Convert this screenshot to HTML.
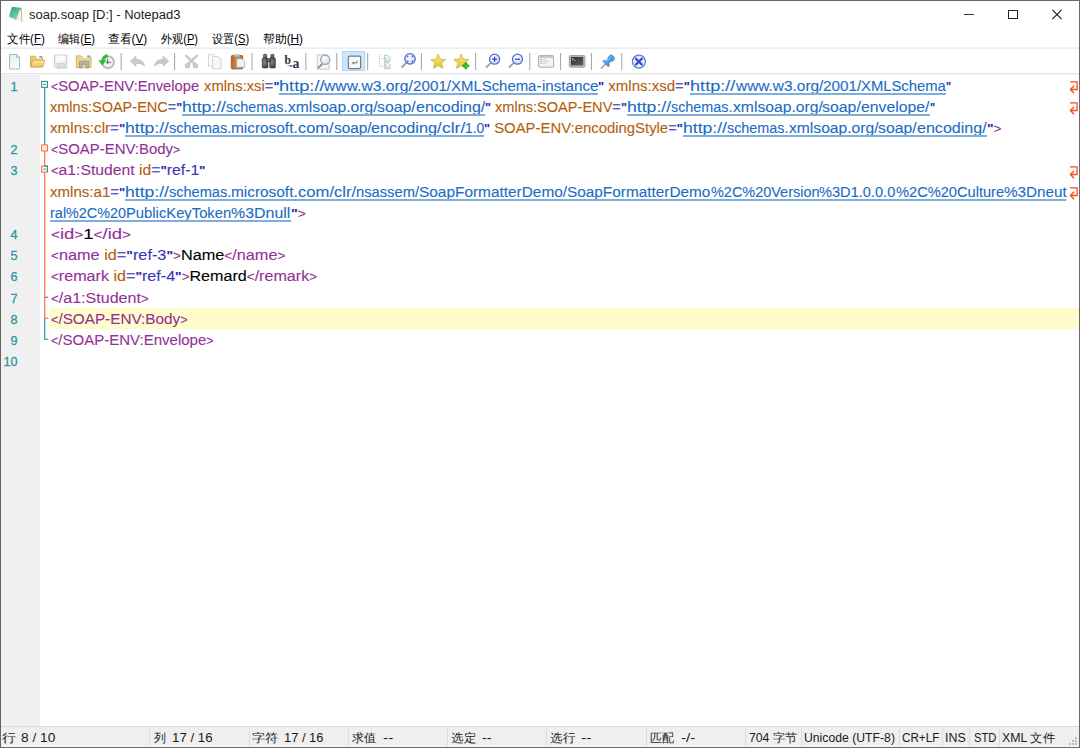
<!DOCTYPE html>
<html><head><meta charset="utf-8"><style>
*{box-sizing:border-box}
html,body{margin:0;padding:0}
body{width:1080px;height:748px;position:relative;overflow:hidden;background:#fff;font-family:"Liberation Sans",sans-serif}
.abs{position:absolute}
.row{position:absolute;white-space:pre;font-size:15.2px;-webkit-text-stroke:0.1px currentColor;line-height:20px;height:20px;transform-origin:0 0}
.br{font-size:12.6px}
.u2{color:#1a6cc4}
.ul{position:absolute;height:2px;background:#7eaedc}
.qt{font-weight:bold;font-size:13px;color:#2c2ca8}
.u{color:#1a6cc4;text-decoration:underline;text-decoration-color:#7aaad8;text-underline-offset:2px;text-decoration-thickness:2px;text-decoration-skip-ink:none}
.ln{position:absolute;left:0;width:17.4px;text-align:right;font-size:12.6px;line-height:20px;color:#2a96a4;-webkit-text-stroke:0.3px currentColor}
.wa{position:absolute;left:1067px}
.menu{position:absolute;top:31px;font-size:12px;line-height:16px;color:#000;white-space:pre;transform-origin:0 0}
.ttl{position:absolute;top:7px;font-size:12px;line-height:16px;color:#1a1a1a;white-space:pre;transform-origin:0 0}
.sb{position:absolute;top:730px;font-size:12px;line-height:16px;color:#1a1a1a;white-space:pre;transform-origin:0 0}
.sep{position:absolute;top:53px;width:1px;height:17px;background:#a8a8a8}
.ssep{position:absolute;top:728px;width:1px;height:18px;background:#dcdcdc}
</style></head><body>
<!-- window border -->
<div class="abs" style="left:0;top:0;width:1080px;height:1px;background:#676767"></div>
<div class="abs" style="left:0;top:0;width:1px;height:748px;background:#646464"></div>
<div class="abs" style="left:1px;top:75px;width:1px;height:651px;background:#fafafa"></div>
<div class="abs" style="left:1079px;top:0;width:1px;height:748px;background:#676767"></div>
<div class="abs" style="left:0;top:747px;width:1080px;height:1px;background:#6a6a6a"></div>
<!-- title -->
<svg class="abs" style="left:0;top:0" width="30" height="30" viewBox="0 0 30 30">
<defs><linearGradient id="gIco" x1="0" y1="0" x2="0.6" y2="1"><stop offset="0" stop-color="#14a877"/><stop offset="1" stop-color="#8fd4b8"/></linearGradient></defs>
<path d="M12 6.8L21.6 8.1L16.4 20.2L8.8 16.6Z" fill="url(#gIco)"/>
<path d="M19.9 9.2L21.2 21.8L16.3 20.2Z" fill="#f1f1f1"/>
<path d="M21.3 7.9L21.9 22" stroke="#deb36a" stroke-width="1"/>
</svg>
<div class="ttl" style="left:28.97px;transform:scaleX(1.0806);">soap.soap [D:] - Notepad3</div>
<div class="abs" style="left:964px;top:14px;width:10px;height:1px;background:#333"></div>
<div class="abs" style="left:1008px;top:10px;width:10px;height:9px;border:1px solid #222"></div>
<svg class="abs" style="left:1051px;top:9px" width="12" height="12" viewBox="0 0 12 12"><path d="M1.4 0.9L10.6 10.1M10.6 0.9L1.4 10.1" stroke="#1a1a1a" stroke-width="1.15"/></svg>
<!-- menu -->
<div class="menu" style="left:6.53px;transform:scaleX(0.9627);">文件(<u>F</u>)</div><div class="menu" style="left:58.03px;transform:scaleX(0.9244);">编辑(<u>E</u>)</div><div class="menu" style="left:107.53px;transform:scaleX(0.9791);">查看(<u>V</u>)</div><div class="menu" style="left:161.49px;transform:scaleX(0.9244);">外观(<u>P</u>)</div><div class="menu" style="left:212.00px;transform:scaleX(0.9303);">设置(<u>S</u>)</div><div class="menu" style="left:262.51px;transform:scaleX(0.9849);">帮助(<u>H</u>)</div>
<div class="abs" style="left:1px;top:47px;width:1078px;height:1px;background:#f3f3f3"></div><div class="abs" style="left:1px;top:48px;width:1078px;height:1px;background:#ededed"></div>
<!-- toolbar -->
<svg class="abs" style="left:0;top:48px" width="660" height="26" viewBox="0 48 660 26">
<defs>
<linearGradient id="gDoc" x1="0" y1="0" x2="1" y2="1"><stop offset="0" stop-color="#dfeef2"/><stop offset="1" stop-color="#ffffff"/></linearGradient>
<linearGradient id="gFold" x1="0" y1="0" x2="0" y2="1"><stop offset="0" stop-color="#fbe9a8"/><stop offset="1" stop-color="#e7c268"/></linearGradient>
<linearGradient id="gStar" x1="0" y1="0" x2="0" y2="1"><stop offset="0" stop-color="#f8ec80"/><stop offset="1" stop-color="#e2c22a"/></linearGradient>
<linearGradient id="gBrown" x1="0" y1="0" x2="1" y2="0"><stop offset="0" stop-color="#b86428"/><stop offset="0.5" stop-color="#d88a48"/><stop offset="1" stop-color="#b06020"/></linearGradient>
<radialGradient id="gBin" cx="0.4" cy="0.4" r="0.8"><stop offset="0" stop-color="#8a8a8a"/><stop offset="1" stop-color="#2e2e2e"/></radialGradient>
<radialGradient id="gLens" cx="0.4" cy="0.35" r="0.7"><stop offset="0" stop-color="#ffffff"/><stop offset="1" stop-color="#c8dcef"/></radialGradient>
</defs>
<!-- separators -->
<g fill="#a9a9a9">
<rect x="120.6" y="53" width="1.1" height="17"/><rect x="174" y="53" width="1.1" height="17"/><rect x="251.4" y="53" width="1.1" height="17"/>
<rect x="305.3" y="53" width="1.1" height="17"/><rect x="336.2" y="53" width="1.1" height="17"/><rect x="367.1" y="53" width="1.1" height="17"/>
<rect x="420.9" y="53" width="1.1" height="17"/><rect x="475" y="53" width="1.1" height="17"/><rect x="529.2" y="53" width="1.1" height="17"/>
<rect x="560" y="53" width="1.1" height="17"/><rect x="590.9" y="53" width="1.1" height="17"/><rect x="621.2" y="53" width="1.1" height="17"/>
</g>
<!-- new -->
<path d="M9.5 54.5H17L19.5 57V69H9.5Z" fill="url(#gDoc)" stroke="#a9babd" stroke-width="1"/>
<path d="M16.5 54.5V57.5H19.5" fill="#c7d3d6" stroke="#a9babd" stroke-width="0.8"/>
<!-- open -->
<path d="M30.5 56.2H35L36 57.2H42.5V66.8H30.5Z" fill="#eccb75" stroke="#d2a647" stroke-width="0.9"/>
<path d="M36.5 55.8H41.5V58.5H36.5Z" fill="#ffffff"/><path d="M39.3 56H42V57.6H39.3Z" fill="#49a8e8"/>
<path d="M32.5 60.2H44.8L42.8 67H30.6Z" fill="url(#gFold)" stroke="#d2a647" stroke-width="0.9"/>
<!-- save (disabled) -->
<path d="M54.5 55.2H66.8V68H55.8L54.5 66.7Z" fill="#eeeeee" stroke="#c9c9c9" stroke-width="1"/>
<rect x="56.2" y="55.6" width="9" height="5.8" fill="#fbfbfb"/>
<rect x="57.5" y="63.5" width="7" height="4.3" fill="#dcdcdc" stroke="#c4c4c4" stroke-width="0.6"/>
<!-- save as -->
<path d="M76.3 55.8H81L82 57H91V67.6H76.3Z" fill="#efd389" stroke="#d6ae58" stroke-width="0.9"/>
<path d="M82.5 55.4H89.8V57.6H82.5Z" fill="#ffffff"/><path d="M87.2 55.5H90V57.2H87.2Z" fill="#49a8e8"/>
<path d="M79.5 68V61.2H88.5V68H86.3V64.2H81.8V68Z" fill="#b4b4b4" stroke="#8e8e8e" stroke-width="0.7"/>
<!-- recent -->
<circle cx="108" cy="62.2" r="6" fill="#eef3f3" stroke="#b9b9bd" stroke-width="1.9"/>
<path d="M107.6 58.6V63.9M106.2 62.3H111" fill="none" stroke="#555" stroke-width="0.9"/>
<path d="M107 54.5C103.8 54.9 102 57.2 101.9 60.6L98.9 60.6L102.3 65L105.8 60.6L104.3 60.6C104.5 58.6 105.6 57.3 107.8 56.9Z" fill="#22c32e" stroke="#1aa024" stroke-width="0.4"/>
<!-- undo / redo (disabled) -->
<path d="M130.2 61.2L136 56V59.2C140.5 59.2 144.2 61.5 144.6 66.3C142.6 64 140 63.4 136 63.5V66.4Z" fill="#cacaca" stroke="#bcbcbc" stroke-width="0.6"/>
<path d="M168.8 61.2L163 56V59.2C158.5 59.2 154.8 61.5 154.4 66.3C156.4 64 159 63.4 163 63.5V66.4Z" fill="#cacaca" stroke="#bcbcbc" stroke-width="0.6"/>
<!-- cut (disabled) -->
<path d="M186.2 55.8L194.6 63.6M196.8 55.8L188.4 63.6" stroke="#c6c6c6" stroke-width="2.3" stroke-linecap="round"/>
<ellipse cx="187.6" cy="65.6" rx="2.9" ry="2.5" fill="#c2c2c2" transform="rotate(-35 187.6 65.6)"/>
<ellipse cx="195.4" cy="65.6" rx="2.9" ry="2.5" fill="#c2c2c2" transform="rotate(35 195.4 65.6)"/>
<ellipse cx="187.6" cy="65.6" rx="1.2" ry="0.9" fill="#dcdcdc" transform="rotate(-35 187.6 65.6)"/>
<ellipse cx="195.4" cy="65.6" rx="1.2" ry="0.9" fill="#dcdcdc" transform="rotate(35 195.4 65.6)"/>
<!-- copy (disabled) -->
<path d="M208.5 54.5H213.5L215 56V66.3H208.5Z" fill="#fafafa" stroke="#d2d2d2" stroke-width="0.9"/>
<path d="M212.7 56.5H218.7L221.2 59V68.8H212.7Z" fill="#f7f7f7" stroke="#cfcfcf" stroke-width="0.9"/>
<!-- paste -->
<rect x="231.3" y="55.5" width="11.4" height="13.4" rx="1" fill="url(#gBrown)" stroke="#9c5620" stroke-width="0.8"/>
<path d="M234.5 54.7H239.7V56.8H234.5Z" fill="#c9c9c9" stroke="#9a9a9a" stroke-width="0.6"/>
<path d="M236.8 58.8H242L244.6 61.2V67.3H236.8Z" fill="#eef4f4" stroke="#9fb3b3" stroke-width="0.8"/>
<!-- find (binoculars) -->
<g fill="url(#gBin)" stroke="#2a2a2a" stroke-width="0.5">
<rect x="263.5" y="54.3" width="3.2" height="4" rx="0.8"/><rect x="270.8" y="54.3" width="3.2" height="4" rx="0.8"/>
<rect x="262.2" y="58" width="5.8" height="10" rx="1.2"/><rect x="269.6" y="58" width="5.8" height="10" rx="1.2"/>
<rect x="267" y="58.8" width="3.6" height="3"/>
</g>
<!-- replace -->
<text x="284.6" y="63.8" font-family="Liberation Serif" font-weight="bold" font-size="11.6" fill="#2a2a2a">b</text>
<text x="292.4" y="67.6" font-family="Liberation Serif" font-weight="bold" font-size="13.6" fill="#333">a</text>
<path d="M287.6 64.6Q288.4 66.2 290.6 66" fill="none" stroke="#5a86ee" stroke-width="0.9"/><circle cx="291.2" cy="66" r="1.1" fill="#2a5ee0"/>
<!-- find in files -->
<path d="M317.3 54.8H327.2L329 56.6V69.3H317.3Z" fill="#f2f6f6" stroke="#b1c0c0" stroke-width="0.8"/>
<path d="M318.5 67.6L321.8 64.3" stroke="#8a8a8a" stroke-width="1.8" stroke-linecap="round"/>
<circle cx="325.2" cy="59.8" r="4.6" fill="url(#gLens)" stroke="#a2a2a2" stroke-width="1.2"/>
<!-- word wrap (pressed) -->
<rect x="342.4" y="51.4" width="22.4" height="19.1" fill="#cce8ff" stroke="#99d1ff" stroke-width="0.8"/>
<rect x="348.3" y="56.2" width="12.3" height="12.4" rx="1.3" fill="#f8f8f8" stroke="#7a7a7a" stroke-width="1.2"/>
<path d="M356.8 60.8V62.9H352.6M353.9 61.7L352.5 62.9L353.9 64.1" fill="none" stroke="#555" stroke-width="0.8"/>
<!-- fold tree -->
<path d="M379.3 54V66.2H383.6M379.3 58.6H383.6" fill="none" stroke="#b0b0b0" stroke-width="0.8" stroke-dasharray="0.9 0.9"/>
<path d="M384.4 55.4H388L390 57.4V61.4H384.4Z" fill="#eef5f4" stroke="#a5bdb9" stroke-width="0.8"/>
<path d="M385.8 57V60H388.4" fill="none" stroke="#b8cdca" stroke-width="0.8"/>
<path d="M384.4 62.6H388L390 64.6V68.6H384.4Z" fill="#eef5f4" stroke="#a5bdb9" stroke-width="0.8"/>
<path d="M385.8 64.2V67.2H388.4" fill="none" stroke="#b8cdca" stroke-width="0.8"/>
<!-- zoom fit -->
<path d="M402.2 67L405.6 63.6" stroke="#a4a4a4" stroke-width="2" stroke-linecap="round"/>
<circle cx="410" cy="58.9" r="5.2" fill="url(#gLens)" stroke="#5a6ada" stroke-width="1.3"/>
<path d="M407.3 57.4V56.2H408.5M411.5 56.2H412.7V57.4M412.7 60.4V61.6H411.5M408.5 61.6H407.3V60.4" fill="none" stroke="#3848c8" stroke-width="0.9"/>
<!-- stars -->
<path d="M438.2 54.3L440.3 59.2L445.6 59.6L441.6 63.1L442.9 68.4L438.2 65.6L433.5 68.4L434.8 63.1L430.8 59.6L436.1 59.2Z" fill="url(#gStar)" stroke="#c5a62a" stroke-width="0.7"/>
<path d="M461.2 54.3L463.3 59.2L468.6 59.6L464.6 63.1L465.9 68.4L461.2 65.6L456.5 68.4L457.8 63.1L453.8 59.6L459.1 59.2Z" fill="url(#gStar)" stroke="#c5a62a" stroke-width="0.7"/>
<path d="M464.95 62.80 L466.85 62.80 L466.85 64.85 L468.90 64.85 L468.90 66.75 L466.85 66.75 L466.85 68.80 L464.95 68.80 L464.95 66.75 L462.90 66.75 L462.90 64.85 L464.95 64.85Z" fill="#2bc83a" stroke="#15901f" stroke-width="0.6"/>
<!-- zoom in / out -->
<path d="M486.6 67L490 63.6" stroke="#a4a4a4" stroke-width="2" stroke-linecap="round"/>
<circle cx="494.6" cy="59.2" r="5" fill="url(#gLens)" stroke="#5a6ada" stroke-width="1.3"/>
<path d="M492.1 59.2H497.1M494.6 56.7V61.7" stroke="#2840c0" stroke-width="1.2"/>
<path d="M509.5 67L512.9 63.6" stroke="#a4a4a4" stroke-width="2" stroke-linecap="round"/>
<circle cx="517.5" cy="59.2" r="5" fill="url(#gLens)" stroke="#5a6ada" stroke-width="1.3"/>
<path d="M515 59.2H520" stroke="#2840c0" stroke-width="1.2"/>
<!-- scheme window -->
<rect x="538.6" y="55.4" width="15" height="11.8" rx="1.2" fill="#f3f3f3" stroke="#a4a4a4" stroke-width="0.9"/>
<rect x="538.9" y="55.8" width="14.4" height="2" fill="#c4c4c4"/>

<path d="M540.3 59.3H542" stroke="#6ccc6c" stroke-width="0.9"/><path d="M540.3 61.3H542" stroke="#ec8a8a" stroke-width="0.9"/><path d="M540.3 63.3H542" stroke="#8cbcf0" stroke-width="0.9"/>
<path d="M542.6 59.3H547M542.6 61.3H549M542.6 63.3H546.5" stroke="#c8c8c8" stroke-width="0.8"/>
<!-- console -->
<rect x="569.3" y="55.5" width="15.6" height="11.7" rx="1.2" fill="#c4c4c4" stroke="#9a9a9a" stroke-width="0.9"/>
<linearGradient id="gScr" x1="0" y1="0" x2="1" y2="1"><stop offset="0" stop-color="#2c2c30"/><stop offset="1" stop-color="#62626f"/></linearGradient>
<rect x="570.9" y="56.9" width="12.4" height="8.6" fill="url(#gScr)"/>
<path d="M571.9 58.2L573.6 59.1L571.9 60M573.9 60.5H575.6" fill="none" stroke="#d8d8d8" stroke-width="0.7"/>
<!-- pin -->
<g transform="translate(601.1 68.5) rotate(-45)">
<path d="M0.2 0H6.6" stroke="#9c9c9c" stroke-width="1.4" stroke-linecap="round"/>
<path d="M6.2 -4L7.6 -4Q9.2 -1.6 11.2 -1.6Q12.4 -3.1 13.4 -3.1L16.4 -3.1Q18.6 0 16.4 3.1L13.4 3.1Q12.4 3.1 11.2 1.6Q9.2 1.6 7.6 4L6.2 4Z" fill="#4d9be4" stroke="#3a86d4" stroke-width="0.5"/>
<path d="M7.2 -2.6Q9 -0.6 11.2 -0.8L16 -1.8" fill="none" stroke="#9fd0fa" stroke-width="0.7"/>
</g>
<!-- close -->
<circle cx="638.9" cy="61.6" r="6.5" fill="#eceef4" stroke="#5d78e0" stroke-width="1.3"/>
<path d="M636 58.7L641.8 64.5M641.8 58.7L636 64.5" stroke="#2d4ccc" stroke-width="2.3" stroke-linecap="round"/>
</svg>

<div class="abs" style="left:1px;top:73px;width:1078px;height:1px;background:#e3e3e3"></div><div class="abs" style="left:1px;top:74px;width:1078px;height:1px;background:#f4f4f4"></div>
<!-- editor -->
<div class="abs" style="left:1px;top:75px;width:39.4px;height:651px;background:#f0f0f0"></div>
<div class="abs" style="left:50px;top:307.78px;width:1029px;height:21px;background:#fffccc"></div>
<div class="ln" style="top:76.70px">1</div><div class="ln" style="top:140.24px">2</div><div class="ln" style="top:161.42px">3</div><div class="ln" style="top:224.96px">4</div><div class="ln" style="top:246.14px">5</div><div class="ln" style="top:267.32px">6</div><div class="ln" style="top:288.50px">7</div><div class="ln" style="top:309.68px">8</div><div class="ln" style="top:330.86px">9</div><div class="ln" style="top:352.04px">10</div>
<svg style="position:absolute;left:38px;top:74px" width="12" height="300" viewBox="38 74 12 300">
<line x1="44.7" y1="88.0" x2="44.7" y2="145.54" stroke="#2e9494" stroke-width="1.15"/>
<line x1="44.7" y1="150.54" x2="44.7" y2="318.28000000000003" stroke="#ff6a3a" stroke-width="1.15"/>
<line x1="44.7" y1="318.28000000000003" x2="44.7" y2="339.26" stroke="#2e9494" stroke-width="1.15"/>
<line x1="44.1" y1="339.26" x2="48.2" y2="339.26" stroke="#2e9494" stroke-width="1.15"/>
<line x1="44.7" y1="318.28000000000003" x2="48.2" y2="318.28000000000003" stroke="#ff6a3a" stroke-width="1.15"/>
<line x1="44.7" y1="297.3" x2="48.2" y2="297.3" stroke="#2e9494" stroke-width="1.15"/>
<rect x="41.65" y="81.45" width="5.8" height="5.9" fill="#fff" stroke="#2e9494" stroke-width="1.1"/>
<line x1="43.2" y1="84.4" x2="46.2" y2="84.4" stroke="#2e9494" stroke-width="1"/>
<rect x="41.65" y="144.98999999999998" width="5.8" height="5.9" fill="#fff" stroke="#ff6a3a" stroke-width="1.1"/>
<line x1="43.2" y1="147.94" x2="46.2" y2="147.94" stroke="#ffb090" stroke-width="1"/>
<rect x="41.65" y="166.17" width="5.8" height="5.9" fill="#fff" stroke="#ff6a3a" stroke-width="1.1"/>
<path d="M44.7 166.17H47.45V172.07" fill="none" stroke="#2e9494" stroke-width="1.1"/>
<line x1="43.2" y1="169.12" x2="46.2" y2="169.12" stroke="#2e9494" stroke-width="1"/>
</svg>
<div class="row" id="g0_0" style="top:75.70px;left:51.40px;transform:scaleX(0.9690)"><span style="color:#923196"><span class="br">&lt;</span>SOAP-ENV:Envelope</span></div><div class="row" id="g0_1" style="top:75.70px;left:199.50px;transform:scaleX(0.9716)"><span style="color:#b25e0c"> xmlns:xsi</span><span style="color:#5a5acc">=</span><span style="color:#3636b4"><span class="qt">"</span></span></div><div class="row" id="g0_2" style="top:75.70px;left:278.90px;transform:scaleX(1.1974)"><span class="u2">http://</span></div><div class="row" id="g0_3" style="top:75.70px;left:324.40px;transform:scaleX(1.0326)"><span class="u2">www.w3.org/</span></div><div class="row" id="g0_4" style="top:75.70px;left:413.30px;transform:scaleX(1.0022)"><span class="u2">2001/</span></div><div class="row" id="g0_5" style="top:75.70px;left:451.40px;transform:scaleX(0.9824)"><span class="u2">XMLSchema-</span></div><div class="row" id="g0_6" style="top:75.70px;left:541.80px;transform:scaleX(0.9969)"><span class="u2">instance</span></div><div class="ul" style="top:93px;left:278.90px;width:319.30px"></div><div class="row" id="g0_8" style="top:75.70px;left:598.20px;transform:scaleX(0.9887)"><span style="color:#3636b4"><span class="qt">"</span></span><span style="color:#b25e0c"> xmlns:xsd</span><span style="color:#5a5acc">=</span><span style="color:#3636b4"><span class="qt">"</span></span></div><div class="row" id="g0_9" style="top:75.70px;left:690.10px;transform:scaleX(1.1947)"><span class="u2">http://</span></div><div class="row" id="g0_10" style="top:75.70px;left:735.50px;transform:scaleX(1.0152)"><span class="u2">www.w3.org/</span></div><div class="row" id="g0_11" style="top:75.70px;left:822.90px;transform:scaleX(1.0048)"><span class="u2">2001/</span></div><div class="row" id="g0_12" style="top:75.70px;left:861.10px;transform:scaleX(0.9752)"><span class="u2">XMLSchema</span></div><div class="ul" style="top:93px;left:690.10px;width:255.80px"></div><div class="row" id="g0_14" style="top:75.70px;left:945.90px;transform:scaleX(0.8263)"><span style="color:#3636b4"><span class="qt">"</span></span></div><div class="row" id="g1_0" style="top:96.88px;left:50.00px;transform:scaleX(0.9561)"><span style="color:#b25e0c">xmlns:SOAP-ENC</span><span style="color:#5a5acc">=</span><span style="color:#3636b4"><span class="qt">"</span></span></div><div class="row" id="g1_1" style="top:96.88px;left:182.20px;transform:scaleX(1.1579)"><span class="u2">http://</span></div><div class="row" id="g1_2" style="top:96.88px;left:226.20px;transform:scaleX(0.9462)"><span class="u2">schemas.</span></div><div class="row" id="g1_3" style="top:96.88px;left:287.70px;transform:scaleX(1.0304)"><span class="u2">xmlsoap.org/</span></div><div class="row" id="g1_4" style="top:96.88px;left:377.30px;transform:scaleX(1.0389)"><span class="u2">soap/</span></div><div class="row" id="g1_5" style="top:96.88px;left:415.90px;transform:scaleX(1.0520)"><span class="u2">encoding/</span></div><div class="ul" style="top:114px;left:182.20px;width:303.00px"></div><div class="row" id="g1_7" style="top:96.88px;left:485.20px;transform:scaleX(0.9593)"><span style="color:#3636b4"><span class="qt">"</span></span><span style="color:#b25e0c"> xmlns:SOAP-ENV</span><span style="color:#5a5acc">=</span><span style="color:#3636b4"><span class="qt">"</span></span></div><div class="row" id="g1_8" style="top:96.88px;left:627.00px;transform:scaleX(1.1605)"><span class="u2">http://</span></div><div class="row" id="g1_9" style="top:96.88px;left:671.10px;transform:scaleX(0.9446)"><span class="u2">schemas.</span></div><div class="row" id="g1_10" style="top:96.88px;left:732.50px;transform:scaleX(1.0327)"><span class="u2">xmlsoap.org/</span></div><div class="row" id="g1_11" style="top:96.88px;left:822.30px;transform:scaleX(1.0442)"><span class="u2">soap/</span></div><div class="row" id="g1_12" style="top:96.88px;left:861.10px;transform:scaleX(1.0383)"><span class="u2">envelope/</span></div><div class="ul" style="top:114px;left:627.00px;width:302.50px"></div><div class="row" id="g1_14" style="top:96.88px;left:929.50px;transform:scaleX(0.8263)"><span style="color:#3636b4"><span class="qt">"</span></span></div><div class="row" id="g2_0" style="top:118.06px;left:50.00px;transform:scaleX(1.0033)"><span style="color:#b25e0c">xmlns:clr</span><span style="color:#5a5acc">=</span><span style="color:#3636b4"><span class="qt">"</span></span></div><div class="row" id="g2_1" style="top:118.06px;left:125.20px;transform:scaleX(1.1579)"><span class="u2">http://</span></div><div class="row" id="g2_2" style="top:118.06px;left:169.20px;transform:scaleX(0.9569)"><span class="u2">schemas.</span></div><div class="row" id="g2_3" style="top:118.06px;left:231.40px;transform:scaleX(1.0132)"><span class="u2">microsoft.</span></div><div class="row" id="g2_4" style="top:118.06px;left:298.10px;transform:scaleX(1.0783)"><span class="u2">com/</span></div><div class="row" id="g2_5" style="top:118.06px;left:333.60px;transform:scaleX(1.0119)"><span class="u2">soap/</span></div><div class="row" id="g2_6" style="top:118.06px;left:371.20px;transform:scaleX(1.0717)"><span class="u2">encoding/</span></div><div class="row" id="g2_7" style="top:118.06px;left:441.80px;transform:scaleX(1.1506)"><span class="u2">clr/</span></div><div class="row" id="g2_8" style="top:118.06px;left:465.10px;transform:scaleX(0.9136)"><span class="u2">1.0</span></div><div class="ul" style="top:135px;left:125.20px;width:359.20px"></div><div class="row" id="g2_10" style="top:118.06px;left:484.40px;transform:scaleX(0.9798)"><span style="color:#3636b4"><span class="qt">"</span></span><span style="color:#b25e0c"> SOAP-ENV:encodingStyle</span><span style="color:#5a5acc">=</span><span style="color:#3636b4"><span class="qt">"</span></span></div><div class="row" id="g2_11" style="top:118.06px;left:683.30px;transform:scaleX(1.1579)"><span class="u2">http://</span></div><div class="row" id="g2_12" style="top:118.06px;left:727.30px;transform:scaleX(0.9462)"><span class="u2">schemas.</span></div><div class="row" id="g2_13" style="top:118.06px;left:788.80px;transform:scaleX(1.0304)"><span class="u2">xmlsoap.org/</span></div><div class="row" id="g2_14" style="top:118.06px;left:878.40px;transform:scaleX(1.0389)"><span class="u2">soap/</span></div><div class="row" id="g2_15" style="top:118.06px;left:917.00px;transform:scaleX(1.0581)"><span class="u2">encoding/</span></div><div class="ul" style="top:135px;left:683.30px;width:303.40px"></div><div class="row" id="g2_17" style="top:118.06px;left:986.70px;transform:scaleX(1.0716)"><span style="color:#3636b4"><span class="qt">"</span></span><span style="color:#923196"><span class="br">&gt;</span></span></div><div class="row" id="r3" style="top:139.24px;left:51.20px;transform:scaleX(0.9828)"><span style="color:#923196"><span class="br">&lt;</span>SOAP-ENV:Body<span class="br">&gt;</span></span></div><div class="row" id="r4" style="top:160.42px;left:51.20px;transform:scaleX(1.0347)"><span style="color:#923196"><span class="br">&lt;</span>a1:Student</span><span style="color:#b25e0c"> id</span><span style="color:#5a5acc">=</span><span style="color:#3636b4"><span class="qt">"</span>ref-1<span class="qt">"</span></span></div><div class="row" id="g5_0" style="top:181.60px;left:50.00px;transform:scaleX(0.9917)"><span style="color:#b25e0c">xmlns:a1</span><span style="color:#5a5acc">=</span><span style="color:#3636b4"><span class="qt">"</span></span></div><div class="row" id="g5_1" style="top:181.60px;left:125.20px;transform:scaleX(1.1579)"><span class="u2">http://</span></div><div class="row" id="g5_2" style="top:181.60px;left:169.20px;transform:scaleX(0.9569)"><span class="u2">schemas.</span></div><div class="row" id="g5_3" style="top:181.60px;left:231.40px;transform:scaleX(1.0132)"><span class="u2">microsoft.</span></div><div class="row" id="g5_4" style="top:181.60px;left:298.10px;transform:scaleX(1.0965)"><span class="u2">com/</span></div><div class="row" id="g5_5" style="top:181.60px;left:334.20px;transform:scaleX(1.0864)"><span class="u2">clr/</span></div><div class="row" id="g5_6" style="top:181.60px;left:356.20px;transform:scaleX(0.9692)"><span class="u2">nsassem/</span></div><div class="row" id="g5_7" style="top:181.60px;left:419.20px;transform:scaleX(1.0142)"><span class="u2">SoapFormatterDemo/</span></div><div class="row" id="g5_8" style="top:181.60px;left:567.30px;transform:scaleX(1.0112)"><span class="u2">SoapFormatterDemo</span></div><div class="row" id="g5_9" style="top:181.60px;left:710.70px;transform:scaleX(0.9519)"><span class="u2">%2C%20Version</span></div><div class="row" id="g5_10" style="top:181.60px;left:819.20px;transform:scaleX(0.9613)"><span class="u2">%3D1.0.0.0</span></div><div class="row" id="g5_11" style="top:181.60px;left:895.50px;transform:scaleX(0.9628)"><span class="u2">%2C%20Culture</span></div><div class="row" id="g5_12" style="top:181.60px;left:1003.60px;transform:scaleX(1.0035)"><span class="u2">%3Dneut</span></div><div class="ul" style="top:199px;left:125.20px;width:941.10px"></div><div class="row" id="g6_0" style="top:202.78px;left:50.00px;transform:scaleX(0.9591)"><span class="u2">ral</span></div><div class="row" id="g6_1" style="top:202.78px;left:66.20px;transform:scaleX(0.9474)"><span class="u2">%2C%20</span></div><div class="row" id="g6_2" style="top:202.78px;left:126.20px;transform:scaleX(0.9735)"><span class="u2">PublicKeyToken</span></div><div class="row" id="g6_3" style="top:202.78px;left:231.40px;transform:scaleX(1.0502)"><span class="u2">%3Dnull</span></div><div class="ul" style="top:220px;left:50.00px;width:240.80px"></div><div class="row" id="g6_5" style="top:202.78px;left:290.80px;transform:scaleX(1.0938)"><span style="color:#3636b4"><span class="qt">"</span></span><span style="color:#923196"><span class="br">&gt;</span></span></div><div class="row" id="r7" style="top:223.96px;left:51.20px;transform:scaleX(1.2173)"><span style="color:#923196"><span class="br">&lt;</span>id<span class="br">&gt;</span></span><span style="color:#000000">1</span><span style="color:#923196"><span class="br">&lt;</span>/id<span class="br">&gt;</span></span></div><div class="row" id="r8" style="top:245.14px;left:51.20px;transform:scaleX(1.0716)"><span style="color:#923196"><span class="br">&lt;</span>name</span><span style="color:#b25e0c"> id</span><span style="color:#5a5acc">=</span><span style="color:#3636b4"><span class="qt">"</span>ref-3<span class="qt">"</span></span><span style="color:#923196"><span class="br">&gt;</span></span><span style="color:#000000">Name</span><span style="color:#923196"><span class="br">&lt;</span>/name<span class="br">&gt;</span></span></div><div class="row" id="r9" style="top:266.32px;left:51.20px;transform:scaleX(1.0613)"><span style="color:#923196"><span class="br">&lt;</span>remark</span><span style="color:#b25e0c"> id</span><span style="color:#5a5acc">=</span><span style="color:#3636b4"><span class="qt">"</span>ref-4<span class="qt">"</span></span><span style="color:#923196"><span class="br">&gt;</span></span><span style="color:#000000">Remard</span><span style="color:#923196"><span class="br">&lt;</span>/remark<span class="br">&gt;</span></span></div><div class="row" id="r10" style="top:287.50px;left:51.20px;transform:scaleX(1.0568)"><span style="color:#923196"><span class="br">&lt;</span>/a1:Student<span class="br">&gt;</span></span></div><div class="row" id="r11" style="top:308.68px;left:51.20px;transform:scaleX(1.0063)"><span style="color:#923196"><span class="br">&lt;</span>/SOAP-ENV:Body<span class="br">&gt;</span></span></div><div class="row" id="r12" style="top:329.86px;left:51.20px;transform:scaleX(0.9889)"><span style="color:#923196"><span class="br">&lt;</span>/SOAP-ENV:Envelope<span class="br">&gt;</span></span></div>
<svg class="wa" style="top:79.80px" width="12" height="16" viewBox="0 0 12 16"><path d="M3.1 1.9H10.1V9.5H3.6M7.1 5.8L3.4 9.5L7.1 13.3" fill="none" stroke="#ff4a1a" stroke-width="1.3"/></svg><svg class="wa" style="top:100.98px" width="12" height="16" viewBox="0 0 12 16"><path d="M3.1 1.9H10.1V9.5H3.6M7.1 5.8L3.4 9.5L7.1 13.3" fill="none" stroke="#ff4a1a" stroke-width="1.3"/></svg><svg class="wa" style="top:164.52px" width="12" height="16" viewBox="0 0 12 16"><path d="M3.1 1.9H10.1V9.5H3.6M7.1 5.8L3.4 9.5L7.1 13.3" fill="none" stroke="#ff4a1a" stroke-width="1.3"/></svg><svg class="wa" style="top:185.70px" width="12" height="16" viewBox="0 0 12 16"><path d="M3.1 1.9H10.1V9.5H3.6M7.1 5.8L3.4 9.5L7.1 13.3" fill="none" stroke="#ff4a1a" stroke-width="1.3"/></svg>
<!-- status bar -->
<div class="abs" style="left:1px;top:726px;width:1078px;height:1px;background:#dadada"></div>
<div class="abs" style="left:1px;top:727px;width:1078px;height:19px;background:#efefef"></div><div class="abs" style="left:1px;top:746px;width:1078px;height:1px;background:#f7f7f7"></div>
<div class="sb" style="left:2.04px;transform:scaleX(1.1629);">行</div><div class="sb" style="left:20.87px;transform:scaleX(1.1453);">8 / 10</div><div class="sb" style="left:153.80px;transform:scaleX(1.0000);">列</div><div class="sb" style="left:172.44px;transform:scaleX(1.1057);">17 / 16</div><div class="sb" style="left:251.89px;transform:scaleX(1.0952);">字符</div><div class="sb" style="left:284.43px;transform:scaleX(1.0748);">17 / 16</div><div class="sb" style="left:352.48px;transform:scaleX(1.0093);">求值</div><div class="sb" style="left:382.85px;transform:scaleX(1.2947);">--</div><div class="sb" style="left:450.94px;transform:scaleX(1.0455);">选定</div><div class="sb" style="left:482.40px;transform:scaleX(1.2059);">--</div><div class="sb" style="left:549.94px;transform:scaleX(1.0464);">选行</div><div class="sb" style="left:581.33px;transform:scaleX(1.2947);">--</div><div class="sb" style="left:650.00px;transform:scaleX(1.0031);">匹配</div><div class="sb" style="left:680.90px;transform:scaleX(1.2637);">-/-</div><div class="sb" style="left:748.98px;transform:scaleX(1.0185);">704 字节</div><div class="sb" style="left:804.49px;transform:scaleX(1.0182);">Unicode (UTF-8)</div><div class="sb" style="left:902.03px;transform:scaleX(0.9730);">CR+LF</div><div class="sb" style="left:945.46px;transform:scaleX(1.0335);">INS</div><div class="sb" style="left:974.02px;transform:scaleX(0.9306);">STD</div><div class="sb" style="left:1002.48px;transform:scaleX(1.0316);">XML 文件</div><div class="ssep" style="left:149.1px"></div><div class="ssep" style="left:248.8px"></div><div class="ssep" style="left:347.9px"></div><div class="ssep" style="left:447.1px"></div><div class="ssep" style="left:546.3px"></div><div class="ssep" style="left:645.5px"></div><div class="ssep" style="left:745.3px"></div><div class="ssep" style="left:801.0px"></div><div class="ssep" style="left:898.6px"></div><div class="ssep" style="left:942.1px"></div><div class="ssep" style="left:969.4px"></div><div class="ssep" style="left:999.4px"></div><svg class="abs" style="left:1066px;top:735px" width="12" height="12" viewBox="1066 735 12 12" fill="#bdbdbd"><rect x="1075" y="737" width="2" height="2"/><rect x="1072" y="740" width="2" height="2"/><rect x="1075" y="740" width="2" height="2"/><rect x="1069" y="743" width="2" height="2"/><rect x="1072" y="743" width="2" height="2"/><rect x="1075" y="743" width="2" height="2"/></svg>
</body></html>
